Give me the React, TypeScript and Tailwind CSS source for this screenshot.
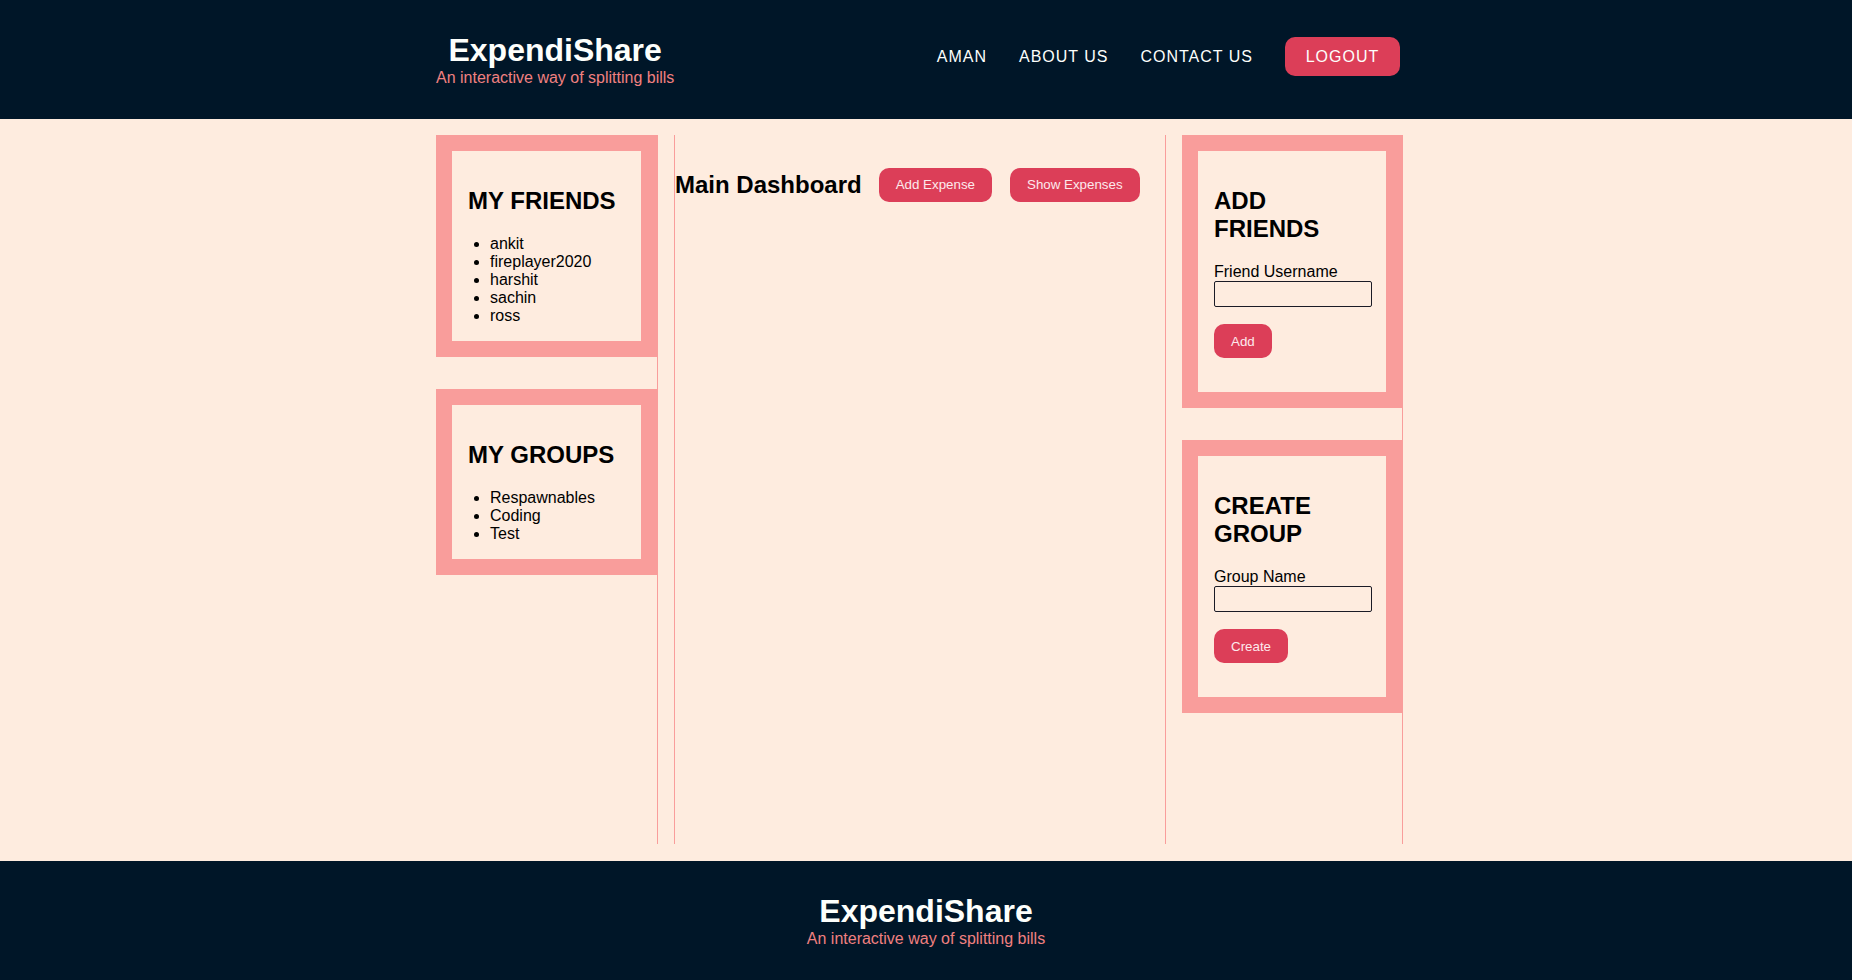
import React from "react";

const PINK = "bg-[#f99d9b]";

function Card({
  title,
  children,
  outerW,
  innerH,
}: {
  title: React.ReactNode;
  children: React.ReactNode;
  outerW: string;
  innerH: string;
}) {
  return (
    <div className={`${PINK} ${outerW} p-[16px] box-border shrink-0`}>
      <div className={`bg-[#feecdf] ${innerH} px-[16px] pt-[36px] box-border`}>
        <h2 className="text-[24px] font-bold leading-[normal] text-black mb-[20px]">{title}</h2>
        {children}
      </div>
    </div>
  );
}

function Btn({ children, className = "" }: { children: React.ReactNode; className?: string }) {
  return (
    <button
      className={`h-[34px] px-[17px] rounded-[10px] bg-[#dc3e58] text-[#fde9ec] text-[13.33px] leading-none ${className}`}
    >
      {children}
    </button>
  );
}

export default function App() {
  return (
    <div className="flex flex-col min-h-screen font-['Liberation_Sans',Arial,sans-serif]">
      {/* Header */}
      <header className="h-[119px] bg-[#001628] flex items-center shrink-0">
        <div className="ml-[436px] w-[964px] flex items-center justify-between">
          <div className="text-center whitespace-nowrap">
            <div className="text-[32px] font-bold leading-[normal] text-[#fdfffc]">ExpendiShare</div>
            <div className="text-[16px] leading-[normal] text-[#f08080]">An interactive way of splitting bills</div>
          </div>
          <nav className="flex items-center gap-[32px] mb-[6px] text-[16px] tracking-[1px] text-[#fdfffc]">
            <a className="cursor-pointer">AMAN</a>
            <a className="cursor-pointer">ABOUT US</a>
            <a className="cursor-pointer">CONTACT US</a>
            <button className="w-[115px] h-[39px] rounded-[10px] bg-[#dc3e58] text-[#fdfffc] tracking-[1px] text-[16px]">
              LOGOUT
            </button>
          </nav>
        </div>
      </header>

      {/* Main */}
      <main className="h-[742px] bg-[#feecdf] pt-[16px] box-border shrink-0">
        <div className="ml-[436px] flex items-start">
          {/* Left column */}
          <div className="w-[222px] h-[709px] border-r border-[#f99d9b] box-border flex flex-col gap-[32px]">
            <Card title="MY FRIENDS" outerW="w-[221px]" innerH="h-[190px]">
              <ul className="list-disc pl-[22px] text-[16px] leading-[18px] text-black">
                <li>ankit</li>
                <li>fireplayer2020</li>
                <li>harshit</li>
                <li>sachin</li>
                <li>ross</li>
              </ul>
            </Card>
            <Card title="MY GROUPS" outerW="w-[221px]" innerH="h-[154px]">
              <ul className="list-disc pl-[22px] text-[16px] leading-[18px] text-black">
                <li>Respawnables</li>
                <li>Coding</li>
                <li>Test</li>
              </ul>
            </Card>
          </div>

          {/* Center column */}
          <div className="ml-[16px] w-[492px] h-[709px] border-x border-[#f99d9b] box-border pt-[33px]">
            <div className="flex items-center">
              <h2 className="text-[24px] font-bold leading-[normal] text-black">Main Dashboard</h2>
              <Btn className="ml-[17px]">Add Expense</Btn>
              <Btn className="ml-[18px]">Show Expenses</Btn>
            </div>
          </div>

          {/* Right column */}
          <div className="ml-[16px] w-[221px] h-[709px] border-r border-[#f99d9b] box-border flex flex-col gap-[32px]">
            <Card title={<>ADD<br />FRIENDS</>} outerW="w-[220px]" innerH="h-[241px]">
              <div className="text-[16px] leading-[18.4px] text-black">Friend Username</div>
              <input className="block w-[158px] h-[26px] border border-[#1b1b26] rounded-[2px] bg-transparent outline-none" />
              <Btn className="mt-[17px]">Add</Btn>
            </Card>
            <Card title={<>CREATE<br />GROUP</>} outerW="w-[220px]" innerH="h-[241px]">
              <div className="text-[16px] leading-[18.4px] text-black">Group Name</div>
              <input className="block w-[158px] h-[26px] border border-[#1b1b26] rounded-[2px] bg-transparent outline-none" />
              <Btn className="mt-[17px]">Create</Btn>
            </Card>
          </div>
        </div>
      </main>

      {/* Footer */}
      <footer className="h-[119px] bg-[#001628] flex flex-col items-center justify-center shrink-0">
        <div className="text-[32px] font-bold leading-[normal] text-[#fdfffc]">ExpendiShare</div>
        <div className="text-[16px] leading-[normal] text-[#f08080]">An interactive way of splitting bills</div>
      </footer>
    </div>
  );
}
